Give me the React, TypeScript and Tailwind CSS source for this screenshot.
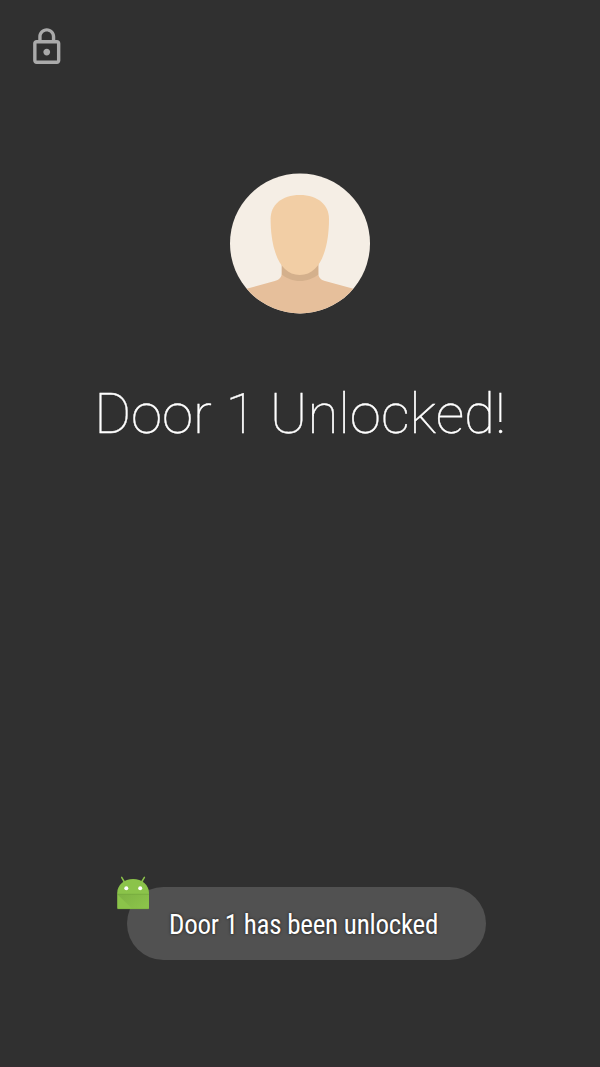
function LockIcon() {
  return (
    <svg className="h-[41px] w-[41px]" viewBox="-0.2 -0.3 24.1 24.1" fill="#aaaaaa">
      <path d="M12 17c1.1 0 2-.9 2-2s-.9-2-2-2-2 .9-2 2 .9 2 2 2zm6-9h-1V6c0-2.76-2.24-5-5-5S7 3.240 7 6v2H6c-1.100 0-2 .900-2 2v10c0 1.100.9 2 2 2h12c1.100 0 2-.9 2-2V10c0-1.100-.9-2-2-2zM9 6c0-1.660 1.340-3 3-3s3 1.340 3 3v2H9V6zM18 20H6V10h12v10z" />
    </svg>
  );
}

function Avatar() {
  return (
    <svg className="h-[141px] w-[140px] shrink-0" viewBox="0 0 140 141">
      <defs>
        <clipPath id="avatar-circle">
          <circle cx="70" cy="70.400" r="70" />
        </clipPath>
      </defs>
      <g clipPath="url(#avatar-circle)">
        <rect width="140" height="141" fill="#f5eee5" />
        <path d="M51.800 88v12c0 4.500-3 6.800-7 8L12 117v24h116v-24l-33-9c-4-1.200-6.700-3.500-6.700-8V88z" fill="#e6bf9b" />
        <path d="M51.800 88v13.500c5 4 11 6.500 18 6.500s13.500-2.500 18.500-6.500V88z" fill="#d4b08c" />
        <path d="M69.800 22C88 22 99 32 99 46c0 26-7 56-29.200 56S40.600 72 40.600 46c0-14 11-24 29.200-24z" fill="#f2cea5" />
      </g>
    </svg>
  );
}

function AndroidIcon() {
  return (
    <svg className="absolute -left-[11px] -top-[12px] h-[36px] w-[34px]" viewBox="0 0 34 36">
      <defs>
        <linearGradient id="robot-shade" x1="0" y1="0" x2="1" y2="0.600">
          <stop offset="0" stopColor="#7db143" />
          <stop offset="1" stopColor="#8bc34a" />
        </linearGradient>
      </defs>
      <path d="M9 8 5.700 2.300M25 8l3.400-5.700" stroke="#8bc34a" strokeWidth="1.500" strokeLinecap="round" />
      <path d="M1.200 19.200V18C1.200 10 8.300 4 17.100 4S33 10 33 18v1.200z" fill="#8bc34a" />
      <path d="M1.200 19.200H33V32.800a1.200 1.200 0 0 1-1.200 1.200H2.400a1.200 1.200 0 0 1-1.200-1.200z" fill="#8bc34a" />
      <path d="M1.200 19.200H33V33.500H16z" fill="url(#robot-shade)" />
      <path d="M1.200 19.200H33" stroke="#74aa3c" strokeWidth=".7" />
      <path d="M1.500 33.700h31.200" stroke="#7bb040" strokeWidth=".6" />
      <circle cx="10.300" cy="13.200" r="2" fill="#fff" />
      <circle cx="24.200" cy="13.200" r="2" fill="#fff" />
    </svg>
  );
}

export default function App() {
  return (
    <main className="flex h-[1067px] w-[600px] flex-col items-center overflow-hidden border-b border-[#352d31] bg-[#303030] font-['Roboto',sans-serif]">
      <header className="flex h-[173px] w-full shrink-0 items-start pl-[26px] pt-[26px]">
        <LockIcon />
      </header>
      <Avatar />
      <h1 className="mt-[64px] whitespace-nowrap text-[56.4px] font-thin leading-[72px] text-white [-webkit-text-stroke:0.35px_white]">
        Door 1 Unlocked!
      </h1>
      <div className="relative mb-[106px] ml-[13px] mt-auto flex h-[73px] w-[359px] items-center rounded-full bg-[#515151] pl-[42px]">
        <AndroidIcon />
        <p className="whitespace-nowrap pt-[4px] font-['Roboto_Condensed','Roboto',sans-serif] text-[27px] tracking-[-0.25px] text-white [text-shadow:0_0_3px_rgba(0,0,0,0.7)]">
          Door 1 has been unlocked
        </p>
      </div>
    </main>
  );
}
